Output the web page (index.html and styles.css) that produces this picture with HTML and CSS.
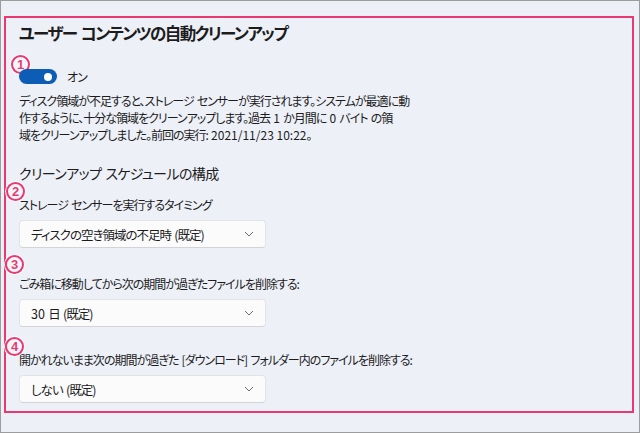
FILE: index.html
```html
<!DOCTYPE html>
<html lang="ja">
<head>
  <meta charset="UTF-8" />
  <meta name="viewport" content="width=device-width, initial-scale=1.0"/>
  <title>ストレージ センサー</title>
<link rel="stylesheet" href="styles.css">
</head>
<body>
  <div class="frame">
    <div class="panel">
      <h2 class="title">ユーザー コンテンツの自動クリーンアップ</h2>

      <!-- toggle -->
      <div class="toggle-row">
        <span class="mark mark-1">1</span>
        <span class="toggle"><span class="knob"></span></span>
        <span class="toggle-label">オン</span>
      </div>

      <p class="desc">
        ディスク領域が不足すると、ストレージ センサーが実行されます。システムが最適に動<br>
        作するように、十分な領域をクリーンアップします。過去 <span class="latin">1</span> か月間に <span class="latin">0</span> バイト の領<br>
        域をクリーンアップしました。前回の実行: <span class="latin">2021/11/23 10:22</span>。
      </p>

      <h3 class="subtitle">クリーンアップ スケジュールの構成</h3>

      <div class="field field-first">
        <span class="mark mark-2">2</span>
        <label class="field-label">ストレージ センサーを実行するタイミング</label>
        <div class="select">
          <span>ディスクの空き領域の不足時 (既定)</span>
          <svg class="chev" width="10" height="6" viewBox="0 0 10 6"><polyline points="1,1 5,5 9,1" fill="none" stroke="#6b6b6b" stroke-width="1"/></svg>
        </div>
      </div>

      <div class="field">
        <span class="mark mark-3">3</span>
        <label class="field-label">ごみ箱に移動してから次の期間が過ぎたファイルを削除する:</label>
        <div class="select">
          <span><span class="latin">30</span> 日 (既定)</span>
          <svg class="chev" width="10" height="6" viewBox="0 0 10 6"><polyline points="1,1 5,5 9,1" fill="none" stroke="#6b6b6b" stroke-width="1"/></svg>
        </div>
      </div>

      <div class="field field-last">
        <span class="mark mark-4">4</span>
        <label class="field-label">開かれないまま次の期間が過ぎた [ダウンロード] フォルダー内のファイルを削除する:</label>
        <div class="select">
          <span>しない (既定)</span>
          <svg class="chev" width="10" height="6" viewBox="0 0 10 6"><polyline points="1,1 5,5 9,1" fill="none" stroke="#6b6b6b" stroke-width="1"/></svg>
        </div>
      </div>
    </div>
  </div>
</body>
</html>
```

FILE: styles.css
```css
body {
  margin: 0;
  padding: 0;
  font-family: "Noto Sans CJK JP", "Noto Sans", sans-serif;
  font-feature-settings: "palt";
  background-color: #edf0f7;
  color: #1c1c1c;
}

.frame {
  width: 640px;
  height: 433px;
  box-sizing: border-box;
  border: 1px solid #9c9c9c;
  padding: 15px 5px 0 3px;
}

.panel {
  height: 397px;
  box-sizing: border-box;
  border: 2px solid #e83a70;
  padding: 3px 13px 0;
}

.title {
  margin: 0;
  font-size: 16.5px;
  line-height: 24px;
  font-weight: 600;
  letter-spacing: -1.6px;
  word-spacing: 2px;
}

.toggle-row {
  position: relative;
  display: flex;
  align-items: center;
  height: 20px;
  margin-top: 21px;
}

.toggle {
  position: relative;
  width: 38px;
  height: 15px;
  border-radius: 8px;
  background-color: #0d5cb6;
}

.knob {
  position: absolute;
  top: 4px;
  left: 25px;
  width: 8px;
  height: 8px;
  border-radius: 50%;
  background-color: #fff;
}

.toggle-label {
  margin-left: 10px;
  font-size: 12px;
  letter-spacing: -1px;
}

.desc {
  margin: 6px 0 0;
  font-size: 12px;
  line-height: 17px;
  letter-spacing: -1px;
  word-spacing: 1.5px;
  white-space: nowrap;
}

.latin {
  letter-spacing: 0;
  word-spacing: 0;
}

.subtitle {
  margin: 19px 0 0;
  font-size: 14px;
  line-height: 22px;
  font-weight: 400;
  letter-spacing: -0.6px;
  word-spacing: 1.5px;
}

.field {
  position: relative;
  margin-top: 27px;
}

.field-first {
  margin-top: 12px;
}

.field-last {
  margin-top: 24px;
}

.field-label {
  display: block;
  font-size: 12px;
  line-height: 18px;
  letter-spacing: -1px;
  word-spacing: 1.5px;
}

.select {
  display: flex;
  align-items: center;
  justify-content: space-between;
  width: 247px;
  height: 28px;
  box-sizing: border-box;
  margin-top: 6px;
  padding: 0 11px;
  border: 1px solid #e2e3e7;
  border-bottom-color: #d3d4d8;
  border-radius: 4px;
  background-color: #fbfbfc;
  font-size: 12.5px;
  letter-spacing: -1px;
  word-spacing: 1.5px;
}

/* circled callout numbers */
.mark {
  position: absolute;
  width: 15px;
  height: 15px;
  border: 2px solid #e83a70;
  border-radius: 50%;
  box-shadow: 0 0 0 1px #fff;
  background-color: rgba(255, 255, 255, 0.35);
  color: #e83a70;
  font-family: "Liberation Sans", sans-serif;
  font-size: 13px;
  font-weight: bold;
  line-height: 15px;
  text-align: center;
  letter-spacing: 0;
  text-shadow: 0 0 2px #fff;
}

.mark-1 {
  left: -8px;
  top: -11px;
}

.mark-2 {
  left: -13px;
  top: -14px;
}

.mark-3 {
  left: -14px;
  top: -20px;
}

.mark-4 {
  left: -14px;
  top: -14px;
}
```
